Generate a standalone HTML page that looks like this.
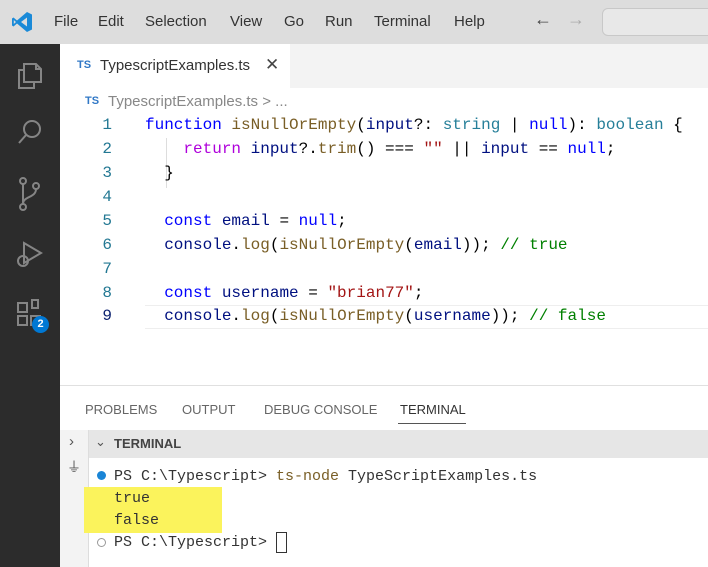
<!DOCTYPE html><html><head><style>
body{margin:0;width:708px;height:567px;overflow:hidden;background:#fff;font-family:"Liberation Sans",sans-serif;position:relative}
.a{position:absolute}
.mono{font-family:"Liberation Mono",monospace;font-size:16px;white-space:pre}
.tm{font-family:"Liberation Mono",monospace;font-size:15px;white-space:pre}
.k{color:#0000ff}.f{color:#795e26}.v{color:#001080}.s{color:#a31515}.c{color:#008000}.t{color:#267f99}.p{color:#af00db}
.ln{position:absolute;left:60px;width:52px;text-align:right;color:#237893;font-family:"Liberation Mono",monospace;font-size:16px}
.cl{position:absolute;left:145px}
</style></head><body>
<div class="a" style="left:0;top:0;width:708px;height:44px;background:#dddddd"></div>
<svg class="a" style="left:10px;top:10px" width="24" height="24" viewBox="0 0 24 24"><path d="M17 2 L22 4.5 V19.5 L17 22 L7 13.5 L3.5 16.5 L2 15.5 V8.5 L3.5 7.5 L7 10.5 Z M17 7.5 L11 12 L17 16.5 Z M3.8 10 V14 L6 12 Z" fill="#1a8ad8" fill-rule="evenodd"/></svg>
<div class="a" style="top:13px;left:54px;font-size:15px;color:#333">File</div>
<div class="a" style="top:13px;left:98px;font-size:15px;color:#333">Edit</div>
<div class="a" style="top:13px;left:145px;font-size:15px;color:#333">Selection</div>
<div class="a" style="top:13px;left:230px;font-size:15px;color:#333">View</div>
<div class="a" style="top:13px;left:284px;font-size:15px;color:#333">Go</div>
<div class="a" style="top:13px;left:325px;font-size:15px;color:#333">Run</div>
<div class="a" style="top:13px;left:374px;font-size:15px;color:#333">Terminal</div>
<div class="a" style="top:13px;left:454px;font-size:15px;color:#333">Help</div>
<div class="a" style="top:9px;left:534px;font-size:18px;color:#444">←</div>
<div class="a" style="top:9px;left:567px;font-size:18px;color:#aaa">→</div>
<div class="a" style="top:8px;left:602px;width:120px;height:26px;border:1px solid #c8c8c8;border-radius:6px;background:#e8e8e8"></div>
<div class="a" style="left:0;top:44px;width:60px;height:523px;background:#2c2c2c"></div>
<svg class="a" style="left:14px;top:56px" width="32" height="280" viewBox="0 0 32 280" fill="none" stroke="#858585" stroke-width="2">
<path d="M10 8 H22 L27 13 V26 H10 Z M22 8 V13 H27 M10 14 H5 V32 H20 V26"/>
<circle cx="18" cy="73" r="8"/><path d="M12 79 L5 87"/>
<circle cx="9" cy="125" r="3"/><circle cx="9" cy="151" r="3"/><circle cx="22" cy="130" r="3"/><path d="M9 128 V148 M22 133 C22 142 9 140 9 148"/>
<path d="M10 187 L27 197 L10 207 Z"/><circle cx="9" cy="205" r="5"/>
<path d="M4 247 H13 V256 H4 Z M4 260 H13 V269 H4 Z M17 260 H26 V269 H17 Z M18 244 L24 244 L24 252 L18 252 Z"/>
</svg>
<div class="a" style="left:32px;top:316px;width:17px;height:17px;border-radius:50%;background:#0078d4;color:#fff;font-size:11px;font-weight:bold;text-align:center;line-height:17px">2</div>
<div class="a" style="left:60px;top:44px;width:648px;height:44px;background:#f3f3f3"></div>
<div class="a" style="left:60px;top:44px;width:230px;height:45px;background:#fff"></div>
<div class="a" style="left:77px;top:59px;font-size:11px;font-weight:bold;color:#3178c6">TS</div>
<div class="a" style="left:100px;top:57px;font-size:15px;color:#333">TypescriptExamples.ts</div>
<div class="a" style="left:265px;top:55px;font-size:17px;color:#444">✕</div>
<div class="a" style="left:85px;top:95px;font-size:11px;font-weight:bold;color:#3178c6">TS</div>
<div class="a" style="left:108px;top:93px;font-size:15px;color:#888">TypescriptExamples.ts &gt; ...</div>
<div class="a" style="left:145px;top:305px;width:563px;height:22px;border:1px solid #eee;border-left:none;border-right:none"></div>
<div class="ln" style="top:116px">1</div><div class="ln" style="top:140px">2</div><div class="ln" style="top:164px">3</div><div class="ln" style="top:188px">4</div><div class="ln" style="top:212px">5</div><div class="ln" style="top:236px">6</div><div class="ln" style="top:260px">7</div><div class="ln" style="top:284px">8</div><div class="ln" style="top:307px;color:#0b216f">9</div>
<div class="a" style="left:166px;top:138px;width:1px;height:50px;background:#ddd"></div>
<div class="cl mono" style="top:116px"><span class="k">function</span> <span class="f">isNullOrEmpty</span>(<span class="v">input</span>?: <span class="t">string</span> | <span class="k">null</span>): <span class="t">boolean</span> {</div>
<div class="cl mono" style="top:140px">    <span class="p">return</span> <span class="v">input</span>?.<span class="f">trim</span>() === <span class="s">""</span> || <span class="v">input</span> == <span class="k">null</span>;</div>
<div class="cl mono" style="top:164px">  }</div>
<div class="cl mono" style="top:212px">  <span class="k">const</span> <span class="v">email</span> = <span class="k">null</span>;</div>
<div class="cl mono" style="top:236px">  <span class="v">console</span>.<span class="f">log</span>(<span class="f">isNullOrEmpty</span>(<span class="v">email</span>)); <span class="c">// true</span></div>
<div class="cl mono" style="top:284px">  <span class="k">const</span> <span class="v">username</span> = <span class="s">"brian77"</span>;</div>
<div class="cl mono" style="top:307px">  <span class="v">console</span>.<span class="f">log</span>(<span class="f">isNullOrEmpty</span>(<span class="v">username</span>)); <span class="c">// false</span></div>
<div class="a" style="left:60px;top:385px;width:648px;height:1px;background:#e0e0e0"></div>
<div class="a" style="left:85px;top:402px;font-size:13px;color:#666">PROBLEMS</div>
<div class="a" style="left:182px;top:402px;font-size:13px;color:#666">OUTPUT</div>
<div class="a" style="left:264px;top:402px;font-size:13px;color:#666">DEBUG CONSOLE</div>
<div class="a" style="left:400px;top:402px;font-size:13px;color:#333">TERMINAL</div>
<div class="a" style="left:398px;top:423px;width:68px;height:1px;background:#555"></div>
<div class="a" style="left:60px;top:430px;width:28px;height:137px;background:#f3f3f3;border-right:1px solid #ddd"></div>
<div class="a" style="left:89px;top:430px;width:619px;height:28px;background:#e6e6e6"></div>
<div class="a" style="left:69px;top:433px;font-size:15px;color:#555">›</div>
<div class="a" style="left:67px;top:457px;font-size:14px;color:#555">⏚</div>
<div class="a" style="left:95px;top:434px;font-size:13px;color:#555">⌄</div>
<div class="a" style="left:114px;top:436px;font-size:13px;font-weight:bold;color:#444">TERMINAL</div>
<div class="a" style="left:84px;top:487px;width:138px;height:46px;background:#fbf35c"></div>
<div class="a" style="left:97px;top:471px;width:9px;height:9px;border-radius:50%;background:#1a85d6"></div>
<div class="a" style="left:97px;top:538px;width:7px;height:7px;border-radius:50%;border:1px solid #999"></div>
<div class="a tm" style="left:114px;top:468px;color:#333">PS C:\Typescript&gt; <span style="color:#795e26">ts-node</span> TypeScriptExamples.ts</div>
<div class="a tm" style="left:114px;top:490px;color:#333">true</div>
<div class="a tm" style="left:114px;top:512px;color:#333">false</div>
<div class="a tm" style="left:114px;top:534px;color:#333">PS C:\Typescript&gt; </div>
<div class="a" style="left:276px;top:532px;width:9px;height:19px;border:1px solid #333"></div>
</body></html>
